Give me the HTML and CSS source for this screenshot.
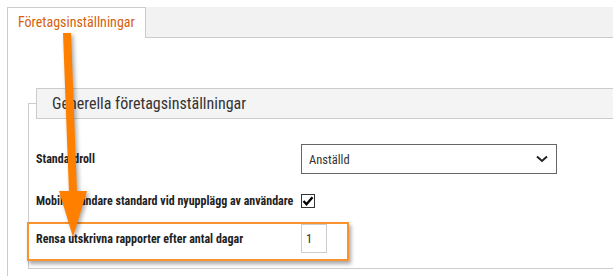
FILE: index.html
```html
<!DOCTYPE html>
<html lang="sv">
<head>
    <meta charset="UTF-8">
    <meta name="viewport" content="width=device-width, initial-scale=1.0">
    <title>Företagsinställningar</title>
    <link rel="stylesheet" href="styles.css">
</head>
<body>
    <div class="tabs">
        <div class="tab active">Företagsinställningar</div>
    </div>
    <div class="tab-content">
        <div class="panel">
            <div class="panel-header">Generella företagsinställningar</div>
            <div class="panel-body">
                <div class="form-row">
                    <label class="form-label">Standardroll</label>
                    <div class="select-box">
                        <span>Anställd</span>
                        <svg class="chevron" width="12" height="8" viewBox="0 0 12 8">
                            <path d="M1 1.5 L6 6 L11 1.5" fill="none" stroke="#222" stroke-width="2"/>
                        </svg>
                    </div>
                </div>
                <div class="form-row row-check">
                    <label class="form-label">Mobilanvändare standard vid nyupplägg av användare</label>
                    <span class="checkbox">
                        <svg width="12" height="12" viewBox="0 0 12 12">
                            <path d="M1.5 6 L4.5 9.2 L10.5 2.2" fill="none" stroke="#000" stroke-width="2.4"/>
                        </svg>
                    </span>
                </div>
                <div class="form-row highlight">
                    <label class="form-label">Rensa utskrivna rapporter efter antal dagar</label>
                    <div class="number-box">1</div>
                </div>
            </div>
        </div>
    </div>

    <!-- annotation arrow -->
    <svg class="arrow" width="613" height="276" viewBox="0 0 613 276">
        <g fill="#ff8000" stroke="none">
            <polygon points="63,33 71,33 77,193 69,193"/>
            <polygon points="59,191 87,191 73,237"/>
        </g>
    </svg>
</body>
</html>
```

FILE: styles.css
```css
* {
    margin: 0;
    padding: 0;
    box-sizing: border-box;
    font-family: 'Roboto Condensed', 'Roboto', sans-serif;
    font-stretch: condensed;
}

body {
    background-color: #fff;
    width: 613px;
    height: 276px;
    overflow: hidden;
    position: relative;
}

.tabs {
    margin: 7px 0 0 7px;
    height: 31px;
    background-color: #f2f2f2;
    border-bottom: 1px solid #ccc;
    display: flex;
}

.tab {
    height: 31px;
    padding: 0 10px;
    line-height: 29px;
    font-size: 14px;
    color: #d7600c;
    background-color: #fff;
    border: 1px solid #ccc;
    border-bottom: none;
}

.tab-content {
    margin-left: 7px;
    border-left: 1px solid #ccc;
    padding: 65px 0 0 20px;
    height: 240px;
    overflow: hidden;
}

.panel {
    border: 1px solid #ccc;
    border-right: none;
}

.panel-header {
    margin: -16px 0 0 7px;
    height: 31px;
    line-height: 29px;
    padding-left: 15px;
    background-color: #f4f4f4;
    border: 1px solid #ccc;
    border-right: none;
    font-size: 16px;
    color: #333;
}

.panel-body {
    padding: 25px 0 15px 0;
}

.form-row {
    display: flex;
    align-items: center;
    padding-left: 7px;
    position: relative;
}

.form-row + .form-row {
    margin-top: 20px;
}

.form-row.highlight {
    margin-top: 16px;
}

.form-label {
    width: 265px;
    white-space: nowrap;
    font-size: 12px;
    font-weight: bold;
    color: #222;
}

.select-box {
    width: 256px;
    height: 30px;
    border: 1px solid #666;
    display: flex;
    align-items: center;
    justify-content: space-between;
    padding: 0 8px 0 7px;
    font-size: 12.5px;
    color: #333;
}

.checkbox {
    width: 14px;
    height: 14px;
    border: 1px solid #333;
    display: flex;
    align-items: center;
    justify-content: center;
}

.number-box {
    width: 26px;
    height: 29px;
    border: 1px solid #ccc;
    padding-left: 4px;
    line-height: 27px;
    font-size: 12.5px;
    color: #333;
}

/* orange annotation frame */
.form-row.highlight::after {
    content: '';
    position: absolute;
    left: -2px;
    top: -2px;
    width: 318px;
    height: 35px;
    border: 2px solid #f7942f;
    box-shadow: 2px 3px 4px rgba(0, 0, 0, 0.35);
}

.arrow {
    position: absolute;
    left: 0;
    top: 0;
    pointer-events: none;
    filter: drop-shadow(2px 2px 2px rgba(0, 0, 0, 0.35));
}
```
